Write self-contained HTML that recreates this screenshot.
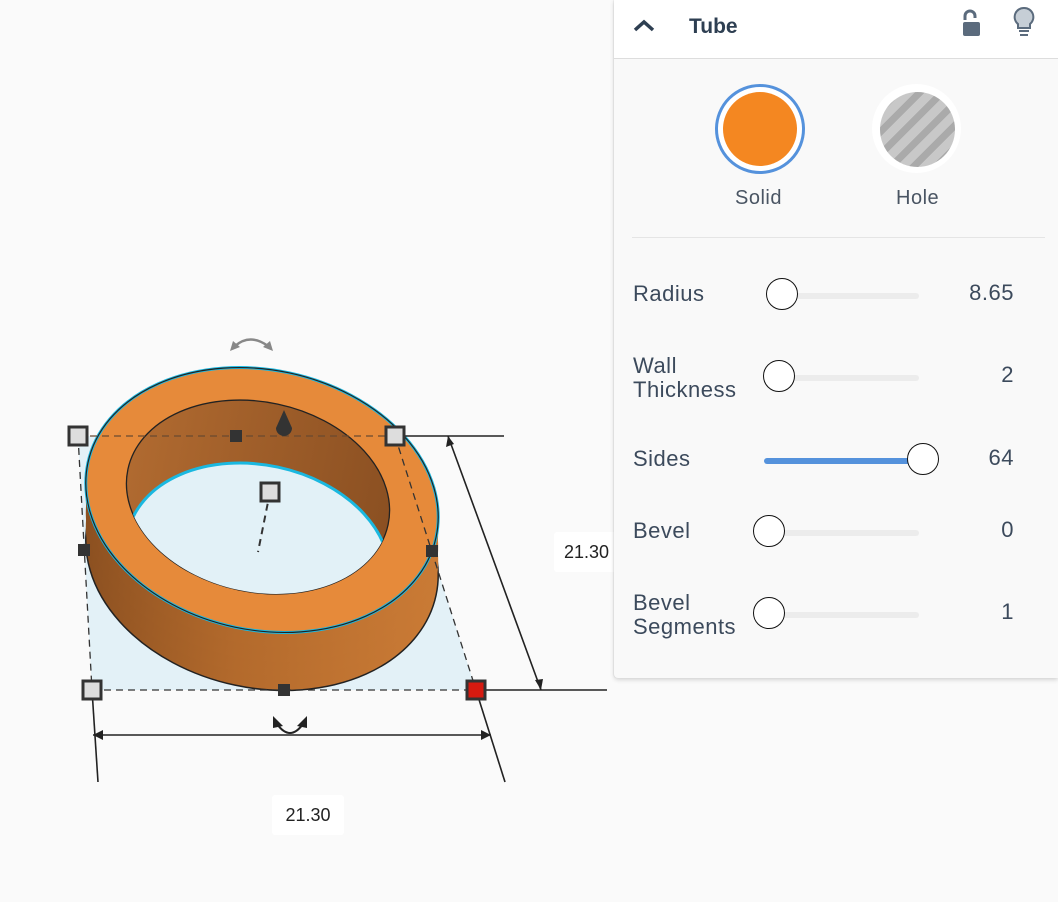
<!DOCTYPE html>
<html><head><style>
body{margin:0;width:1058px;height:902px;background:#fafafa;font-family:"Liberation Sans",sans-serif;position:relative;overflow:hidden}
.p{position:absolute}
.lbl{position:absolute;left:633px;color:#3c4a5c;font-size:22px;line-height:24px;letter-spacing:.5px}
.val{position:absolute;right:44px;color:#3c4a5c;font-size:22px;line-height:24px;text-align:right;letter-spacing:.5px}
.track{position:absolute;height:6px;background:#ececec;border-radius:3px}
.th{position:absolute;width:30px;height:30px;border:1.5px solid #111;border-radius:50%;background:#fff}
</style></head><body>
<svg class="p" style="left:0;top:0" width="614" height="902">
<defs>
<linearGradient id="g" x1="0" x2="1"><stop offset="0" stop-color="#8a4f20"/><stop offset=".5" stop-color="#b36a2c"/><stop offset="1" stop-color="#c97a35"/></linearGradient>
<linearGradient id="gi" x1="0" x2="1"><stop offset="0" stop-color="#b06a30"/><stop offset="1" stop-color="#8b5022"/></linearGradient>
<clipPath id="ci"><ellipse cx="258" cy="497" rx="133" ry="95" transform="rotate(12 258 497)"/></clipPath>
</defs>
<polygon points="78,436 395,436 476,690 92,690" fill="#e3f1f7"/>
<g fill="url(#g)">
<ellipse cx="262" cy="558" rx="178" ry="130" transform="rotate(12 262 558)" stroke="#222" stroke-width="1.5"/>
<ellipse cx="262" cy="544" rx="178" ry="130" transform="rotate(12 262 544)"/>
<ellipse cx="262" cy="530" rx="178" ry="130" transform="rotate(12 262 530)"/>
<ellipse cx="262" cy="515" rx="178" ry="130" transform="rotate(12 262 515)"/>
</g>
<ellipse cx="262" cy="500" rx="178" ry="130" transform="rotate(12 262 500)" fill="#e68a3a" stroke="#1ab8e0" stroke-width="3"/>
<ellipse cx="262" cy="500" rx="178" ry="130" transform="rotate(12 262 500)" fill="none" stroke="#222" stroke-width="1.2"/>
<ellipse cx="258" cy="497" rx="133" ry="95" transform="rotate(12 258 497)" fill="url(#gi)" stroke="#222" stroke-width="1.3"/>
<g clip-path="url(#ci)"><ellipse cx="258" cy="560" rx="133" ry="95" transform="rotate(12 258 560)" fill="#e2f1f7" stroke="#1ab8e0" stroke-width="3"/></g>
<g stroke="#333" stroke-width="1.3" fill="none" stroke-dasharray="7,5">
<line x1="78" y1="436" x2="395" y2="436" stroke="#6a4a30"/>
<line x1="78" y1="436" x2="92" y2="690"/>
<line x1="395" y1="436" x2="476" y2="690"/>
<line x1="92" y1="690" x2="476" y2="690"/>
<line x1="270" y1="492" x2="258" y2="552" stroke-width="2"/>
</g>
<g stroke="#222" stroke-width="1.6" fill="none">
<line x1="395" y1="436" x2="504" y2="436"/>
<line x1="476" y1="690" x2="607" y2="690"/>
<line x1="448" y1="436" x2="541" y2="690"/>
<line x1="92" y1="690" x2="98" y2="782"/>
<line x1="476" y1="690" x2="505" y2="782"/>
<line x1="93" y1="735" x2="491" y2="735"/>
<path d="M277 724 Q290 742 303 724" stroke-width="2"/>
</g>
<polygon points="273,716 283,726 273,728" fill="#222"/><polygon points="307,716 307,728 297,726" fill="#222"/>
<polygon points="93,735 103,730 103,740" fill="#222"/><polygon points="491,735 481,730 481,740" fill="#222"/>
<polygon points="448,436 446,447 454,444" fill="#222"/><polygon points="541,690 535,680 543,679" fill="#222"/>
<path d="M235 346 Q250 333 268 346" stroke="#888" stroke-width="2.5" fill="none"/>
<polygon points="230,351 233,341 240,347" fill="#888"/><polygon points="273,351 270,341 263,347" fill="#888"/>
<path d="M284 410 L292 428 A8 8 0 1 1 276 428 Z" fill="#333"/>
<g fill="#ddd" stroke="#333" stroke-width="3">
<rect x="69" y="427" width="18" height="18"/><rect x="386" y="427" width="18" height="18"/>
<rect x="261" y="483" width="18" height="18"/><rect x="83" y="681" width="18" height="18"/>
<rect x="467" y="681" width="18" height="18" fill="#d51a10"/>
</g>
<g fill="#333"><rect x="230" y="430" width="12" height="12"/><rect x="78" y="544" width="12" height="12"/><rect x="426" y="545" width="12" height="12"/><rect x="278" y="684" width="12" height="12"/></g>
</svg>
<div class="p" style="left:554px;top:532px;width:60px;height:40px;background:#fff;border-radius:3px;font-size:18px;line-height:40px;padding-left:10px;color:#222">21.30</div>
<div class="p" style="left:272px;top:795px;width:72px;height:40px;background:#fff;border-radius:3px;font-size:18px;line-height:40px;text-align:center;color:#222">21.30</div>

<div class="p" style="left:614px;top:0;width:444px;height:678px;background:#f9f9f9;border-radius:0 0 0 4px;box-shadow:0 2px 4px rgba(0,0,0,.15),-1px 0 1px rgba(0,0,0,.06)">
<div style="height:58px;background:#fff;border-bottom:1px solid #ddd;position:relative">
<svg class="p" style="left:18px;top:18px" width="26" height="16"><path d="M3 12 L12 4 L21 12" stroke="#2e3f52" stroke-width="3.5" fill="none"/></svg>
<div class="p" style="left:75px;top:15px;font-size:21px;font-weight:bold;color:#2e3f52">Tube</div>
<svg class="p" style="left:347px;top:8px" width="22" height="30"><path d="M4 12 V8 A5 5 0 0 1 14 8 V10" stroke="#5b6b7d" stroke-width="3" fill="none"/><rect x="2" y="14" width="17" height="14" rx="2" fill="#5b6b7d"/></svg>
<svg class="p" style="left:398px;top:6px" width="24" height="32"><path d="M12 2 A9 9 0 0 1 18 18 V22 H6 V18 A9 9 0 0 1 12 2Z" fill="#c6ced6" stroke="#5b6b7d" stroke-width="2"/><rect x="7" y="24" width="10" height="2" fill="#5b6b7d"/><rect x="8" y="28" width="8" height="2" fill="#5b6b7d"/></svg>
</div>
<div class="p" style="left:101px;top:84px;width:90px;height:90px;border:3px solid #5592dc;border-radius:50%;box-sizing:border-box;background:#fff"></div>
<div class="p" style="left:109px;top:92px;width:74px;height:74px;border-radius:50%;background:#f48721"></div>
<div class="p" style="left:258px;top:84px;width:89px;height:89px;border-radius:50%;background:#fff"></div>
<div class="p" style="left:266px;top:92px;width:75px;height:75px;border-radius:50%;background:repeating-linear-gradient(135deg,#c8c8c8 0 9px,#aaa 9px 16px)"></div>
<div class="p" style="left:121px;top:187px;font-size:20px;color:#4a5563;letter-spacing:.5px">Solid</div>
<div class="p" style="left:282px;top:187px;font-size:20px;color:#4a5563;letter-spacing:.5px">Hole</div>
<div class="p" style="left:18px;top:237px;width:413px;height:1px;background:#e5e5e5"></div>
</div>

<div class="lbl" style="top:282px">Radius</div>
<div class="lbl" style="top:354px">Wall<br>Thickness</div>
<div class="lbl" style="top:447px">Sides</div>
<div class="lbl" style="top:519px">Bevel</div>
<div class="lbl" style="top:591px">Bevel<br>Segments</div>
<div class="val" style="top:281px">8.65</div>
<div class="val" style="top:363px">2</div>
<div class="val" style="top:446px">64</div>
<div class="val" style="top:518px">0</div>
<div class="val" style="top:600px">1</div>
<div class="track" style="left:782px;width:137px;top:293px"></div>
<div class="track" style="left:779px;width:140px;top:375px"></div>
<div class="track" style="left:764px;width:155px;top:458px;background:#5592dc"></div>
<div class="track" style="left:769px;width:150px;top:530px"></div>
<div class="track" style="left:769px;width:150px;top:612px"></div>
<div class="th" style="left:766px;top:278px"></div>
<div class="th" style="left:763px;top:360px"></div>
<div class="th" style="left:907px;top:443px"></div>
<div class="th" style="left:753px;top:515px"></div>
<div class="th" style="left:753px;top:597px"></div>
</body></html>
